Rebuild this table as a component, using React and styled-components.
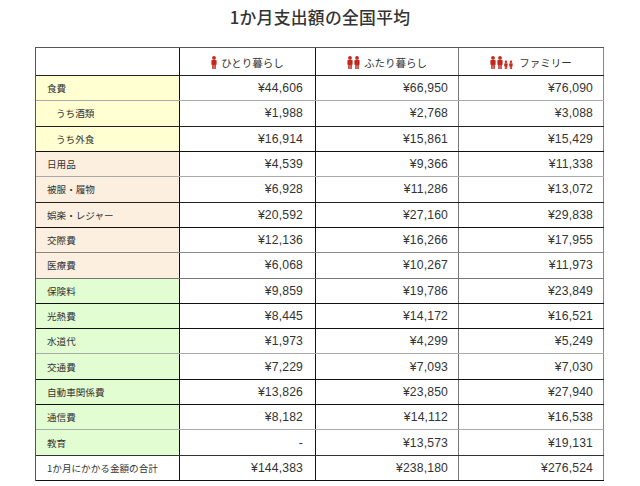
import React from "react";
import styled, { createGlobalStyle } from "styled-components";

const Global = createGlobalStyle`
  html, body { margin: 0; padding: 0; background: #fff; }
  body { font-family: "Liberation Sans", "Noto Sans CJK JP", sans-serif; color: #333; }
`;

const Page = styled.div`
  width: 640px;
  height: 486px;
  overflow: hidden;
`;

const Title = styled.h1`
  margin: 0;
  height: 47px;
  box-sizing: border-box;
  padding-top: 6px;
  text-align: center;
  font-family: "Noto Sans CJK JP", sans-serif;
  font-size: 16.8px;
  line-height: 22px;
  font-weight: 500;
  color: #333;
  letter-spacing: 0.3px;
`;

const Table = styled.div`
  margin-left: 35px;
  width: 569px;
  box-sizing: border-box;
  border-left: 1px solid #555;
  border-top: 1px solid #555;
`;

const Row = styled.div`
  display: grid;
  grid-template-columns: 144px 136px 143px 145px;
  height: ${(p) => p.$h}px;
  box-sizing: border-box;
  border-bottom: 1px solid ${(p) => p.$line};
`;

const Cell = styled.div`
  display: flex;
  align-items: center;
  box-sizing: border-box;
  border-right: 1px solid ${(p) => p.$line || "#222"};
`;

const HeadCell = styled(Cell)`
  justify-content: center;
  gap: 4px;
  font-family: "Noto Sans CJK JP", sans-serif;
  font-size: 10.5px;
  color: #333;
  padding-top: 1px;
`;

const LabelCell = styled(Cell)`
  background: ${(p) => p.$bg};
  padding-left: ${(p) => (p.$sub ? 20 : 11)}px;
  font-family: "Noto Sans CJK JP", sans-serif;
  font-size: 9.6px;
  color: #333;
`;

const NumCell = styled(Cell)`
  justify-content: flex-end;
  padding-right: ${(p) => p.$pr}px;
  font-family: "Liberation Sans", sans-serif;
  font-size: 12.2px;
  letter-spacing: 0.15px;
  color: #333;
`;

const RED = "#c4281d";

const Figure = ({ x, scale = 1 }) => (
  <g transform={`translate(${x} ${13 - 13 * scale}) scale(${scale})`}>
    <circle cx="3" cy="1.9" r="1.9" />
    <path d="M0.4 4.5 Q0.4 4.1 0.9 4.1 L5.1 4.1 Q5.6 4.1 5.6 4.5 L5.6 8.8 L4.8 8.8 L4.8 13 L3.3 13 L3.3 9.2 L2.7 9.2 L2.7 13 L1.2 13 L1.2 8.8 L0.4 8.8 Z" />
  </g>
);

const People = ({ kind }) => {
  if (kind === 1)
    return (
      <svg width="6" height="13" viewBox="0 0 6 13" fill={RED}>
        <Figure x={0} />
      </svg>
    );
  if (kind === 2)
    return (
      <svg width="13" height="13" viewBox="0 0 13 13" fill={RED}>
        <Figure x={0} />
        <Figure x={7} />
      </svg>
    );
  return (
    <svg width="25" height="13" viewBox="0 0 25 13" fill={RED}>
      <Figure x={0} />
      <Figure x={7} />
      <Figure x={14} scale={0.65} />
      <Figure x={19} scale={0.65} />
    </svg>
  );
};

const YEL = "#ffffd2";
const BEI = "#fcefdf";
const GRN = "#e3fdd3";

const rows = [
  { l: "食費", v: ["¥44,606", "¥66,950", "¥76,090"], bg: YEL, line: "#aaa" },
  { l: "うち酒類", sub: true, v: ["¥1,988", "¥2,768", "¥3,088"], bg: YEL, line: "#222" },
  { l: "うち外食", sub: true, v: ["¥16,914", "¥15,861", "¥15,429"], bg: YEL, line: "#111" },
  { l: "日用品", v: ["¥4,539", "¥9,366", "¥11,338"], bg: BEI, line: "#aaa" },
  { l: "被服・履物", v: ["¥6,928", "¥11,286", "¥13,072"], bg: BEI, line: "#222" },
  { l: "娯楽・レジャー", v: ["¥20,592", "¥27,160", "¥29,838"], bg: BEI, line: "#111" },
  { l: "交際費", v: ["¥12,136", "¥16,266", "¥17,955"], bg: BEI, line: "#888" },
  { l: "医療費", v: ["¥6,068", "¥10,267", "¥11,973"], bg: BEI, line: "#777" },
  { l: "保険料", v: ["¥9,859", "¥19,786", "¥23,849"], bg: GRN, line: "#111" },
  { l: "光熱費", v: ["¥8,445", "¥14,172", "¥16,521"], bg: GRN, line: "#111" },
  { l: "水道代", v: ["¥1,973", "¥4,299", "¥5,249"], bg: GRN, line: "#aaa" },
  { l: "交通費", v: ["¥7,229", "¥7,093", "¥7,030"], bg: GRN, line: "#111" },
  { l: "自動車関係費", v: ["¥13,826", "¥23,850", "¥27,940"], bg: GRN, line: "#111" },
  { l: "通信費", v: ["¥8,182", "¥14,112", "¥16,538"], bg: GRN, line: "#aaa" },
  { l: "教育", v: ["-", "¥13,573", "¥19,131"], bg: GRN, line: "#333" },
  { l: "1か月にかかる金額の合計", v: ["¥144,383", "¥238,180", "¥276,524"], bg: "#fff", line: "#111" },
];

const colLines = ["#111", "#111", "#777", "#888"];
const pads = [12, 10, 10];

export default function App() {
  return (
    <Page>
      <Global />
      <Title>1か月支出額の全国平均</Title>
      <Table>
        <Row $h={28} $line="#222">
          <HeadCell $line={colLines[0]} />
          <HeadCell $line={colLines[1]}>
            <People kind={1} />
            <span>ひとり暮らし</span>
          </HeadCell>
          <HeadCell $line={colLines[2]}>
            <People kind={2} />
            <span>ふたり暮らし</span>
          </HeadCell>
          <HeadCell $line={colLines[3]}>
            <People kind={4} />
            <span>ファミリー</span>
          </HeadCell>
        </Row>
        {rows.map((r) => (
          <Row key={r.l} $h={25.3125} $line={r.line}>
            <LabelCell $bg={r.bg} $sub={r.sub} $line={colLines[0]}>
              {r.l}
            </LabelCell>
            {r.v.map((v, i) => (
              <NumCell key={i} $pr={pads[i]} $line={colLines[i + 1]}>
                {v}
              </NumCell>
            ))}
          </Row>
        ))}
      </Table>
    </Page>
  );
}
